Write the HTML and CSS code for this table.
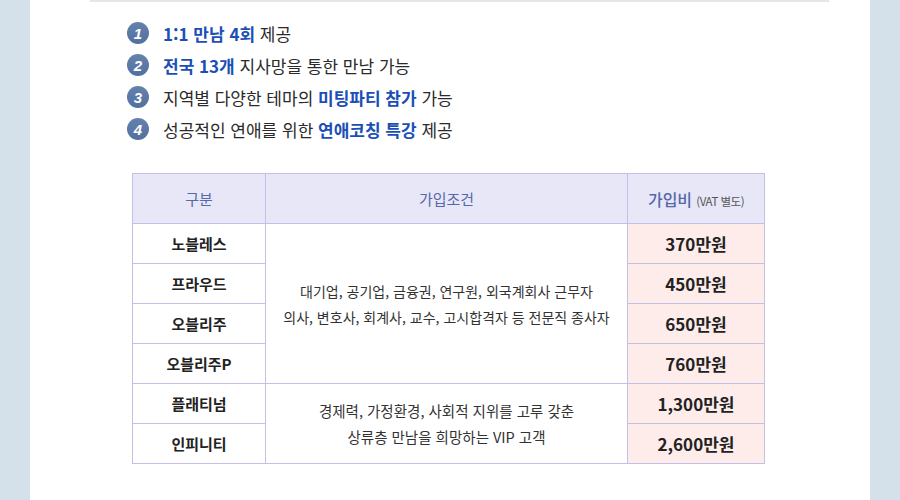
FILE: index.html
```html
<!DOCTYPE html>
<html lang="ko">
<head>
  <meta charset="UTF-8">
  <meta name="viewport" content="width=device-width, initial-scale=1.0">
  <title>가입안내</title>
  <link rel="stylesheet" href="styles.css">
</head>
<body>
  <div class="page">
    <div class="top-rule"></div>
    <ul class="benefits">
      <li><span class="num">1</span><span><b>1:1 만남 4회</b> 제공</span></li>
      <li><span class="num">2</span><span><b>전국 13개</b> 지사망을 통한 만남 가능</span></li>
      <li><span class="num">3</span><span>지역별 다양한 테마의 <b>미팅파티 참가</b> 가능</span></li>
      <li><span class="num">4</span><span>성공적인 연애를 위한 <b>연애코칭 특강</b> 제공</span></li>
    </ul>

    <table class="fees">
      <thead>
        <tr>
          <th class="col-type">구분</th>
          <th class="col-cond">가입조건</th>
          <th class="col-price"><span class="fee-label">가입비</span> <small>(VAT 별도)</small></th>
        </tr>
      </thead>
      <tbody>
        <tr>
          <td class="name">노블레스</td>
          <td class="cond" rowspan="4">대기업, 공기업, 금융권, 연구원, 외국계회사 근무자<br>의사, 변호사, 회계사, 교수, 고시합격자 등 전문직 종사자</td>
          <td class="price">370만원</td>
        </tr>
        <tr>
          <td class="name">프라우드</td>
          <td class="price">450만원</td>
        </tr>
        <tr>
          <td class="name">오블리주</td>
          <td class="price">650만원</td>
        </tr>
        <tr>
          <td class="name">오블리주P</td>
          <td class="price">760만원</td>
        </tr>
        <tr>
          <td class="name">플래티넘</td>
          <td class="cond cond-vip" rowspan="2">경제력, 가정환경, 사회적 지위를 고루 갖춘<br>상류층 만남을 희망하는 VIP 고객</td>
          <td class="price">1,300만원</td>
        </tr>
        <tr>
          <td class="name">인피니티</td>
          <td class="price">2,600만원</td>
        </tr>
      </tbody>
    </table>
  </div>
</body>
</html>
```

FILE: styles.css
```css
body {
  margin: 0;
  background-color: #d5e1ea;
  font-family: "Noto Sans CJK KR", "Noto Sans", sans-serif;
  color: #222222;
}
.page {
  margin: 0 30px;
  height: 500px;
  background: #ffffff;
  overflow: hidden;
}
.top-rule {
  margin-left: 60px;
  width: 739px;
  height: 2px;
  background: #e6e6e6;
}
.benefits {
  list-style: none;
  margin: 0;
  padding: 15px 0 0 97px;
}
.benefits li {
  display: flex;
  align-items: center;
  gap: 14px;
  height: 32px;
  font-size: 17px;
  color: #2a2a2a;
}
.benefits b {
  color: #1c4fb6;
  font-weight: 700;
}
.num {
  display: flex;
  align-items: center;
  justify-content: center;
  width: 22px;
  height: 22px;
  border-radius: 50%;
  background: linear-gradient(#6582ae, #52709f);
  color: #ffffff;
  font-family: "Liberation Sans", Arial, sans-serif;
  font-style: italic;
  font-weight: 700;
  font-size: 15px;
}
.fees {
  margin: 28px 0 0 102px;
  border-collapse: collapse;
  width: 633px;
  table-layout: fixed;
  font-size: 15px;
}
.fees th,
.fees td {
  border: 1px solid #c4bfe6;
  text-align: center;
  padding: 0;
}
.fees th {
  height: 49px;
  background: #e8e7f7;
  font-weight: 400;
  color: #5468ab;
  font-size: 15px;
}
.fee-label {
  font-size: 16px;
  font-weight: 500;
}
.fees th small {
  font-size: 11.5px;
  color: #555555;
  letter-spacing: -0.5px;
}
.col-type { width: 132px; }
.col-price { width: 136px; }
.fees td {
  height: 39px;
}
.name {
  font-weight: 700;
  color: #222222;
}
.cond {
  font-size: 14px;
  line-height: 26px;
  color: #333333;
}
.cond-vip {
  font-size: 14.5px;
}
.price {
  background: #fdecea;
  font-weight: 700;
  font-size: 17px;
  color: #222222;
}
```
